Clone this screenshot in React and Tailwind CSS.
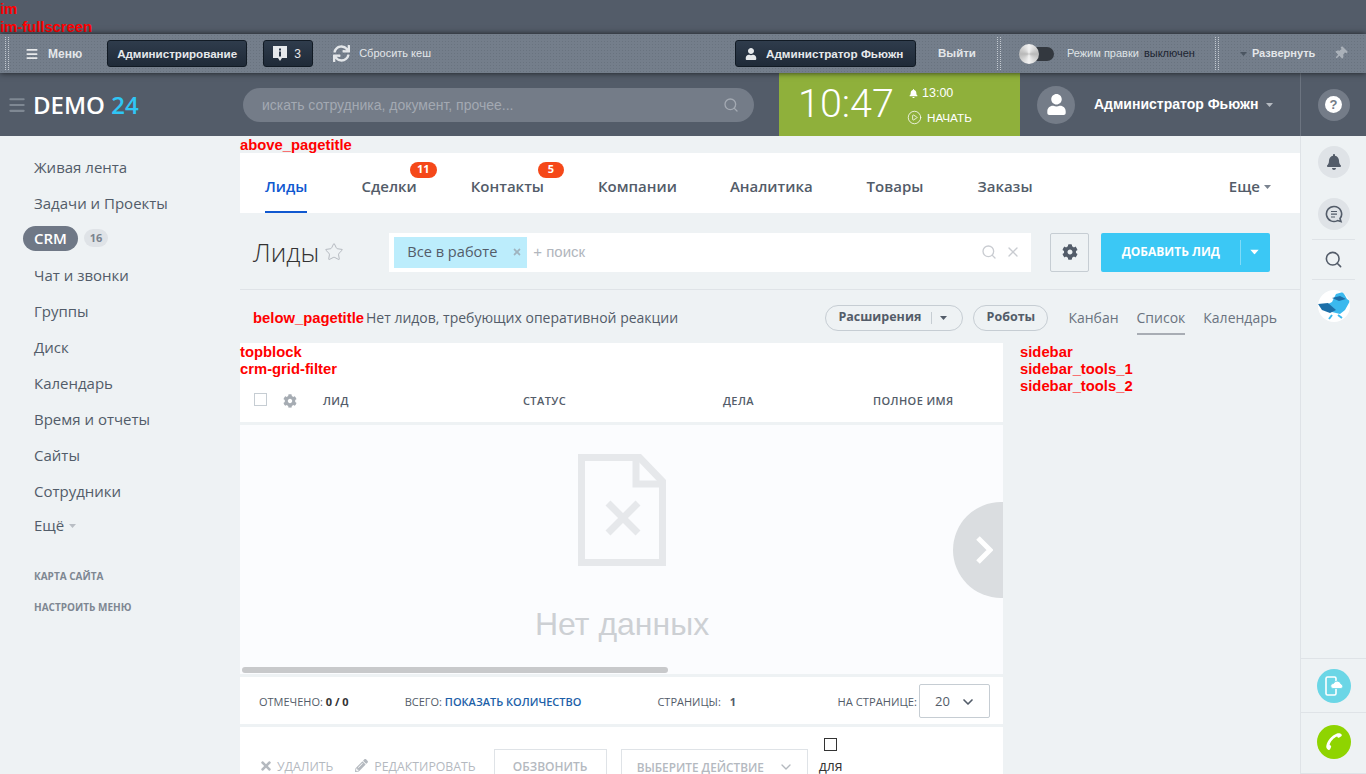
import React from 'react';
import { Menu, Search, X, ChevronDown, Star, CirclePlay } from 'lucide-react';
import { FaCog, FaUser, FaBell, FaThumbtack, FaPencilAlt, FaTimes, FaSync } from 'react-icons/fa';

const OPEN = "font-['Open_Sans',sans-serif]";
const ARIAL = "font-['Liberation_Sans',sans-serif]";

const Caret = ({ className }) => (
    <svg width="7" height="4" viewBox="0 0 7 4" className={className}>
        <path d="M0 0h7L3.5 4z" fill="currentColor" />
    </svg>
);

const Dots = () => (
    <div className="h-[33px] w-[4px] border-x border-dotted border-[#c3c9d0]" />
);

const Label = ({ children, className = '' }) => (
    <div className={`${ARIAL} pt-[1px] text-[14.8px] leading-[16px] font-bold text-[#ff0000] ${className}`}>{children}</div>
);

const DarkBtn = ({ children, className = '' }) => (
    <div className={`h-[27px] flex items-center rounded-[3px] border border-[#111a24] bg-gradient-to-b from-[#2f3c4c] to-[#1f2a38] text-[#e6e9ec] ${className}`}>
        {children}
    </div>
);

const TopPanel = () => (
    <div className={`${ARIAL} relative z-10 h-[39px] flex items-center bg-[#747e8b] bg-[radial-gradient(#69737f_1px,transparent_1px)] bg-[length:3px_3px] shadow-[0_0_6px_rgba(0,0,0,0.7)] text-[12px] font-bold`}>
        <div className="ml-[5px]"><Dots /></div>
        <Menu size={14} strokeWidth={3} className="ml-[16px] text-[#e8eaec]" />
        <span className="ml-[9px] text-[#e3e6e9]">Меню</span>
        <DarkBtn className="ml-[25px] w-[140px] justify-center text-[11.6px]">Администрирование</DarkBtn>
        <DarkBtn className="ml-[16px] w-[50px]">
            <svg width="14" height="16" viewBox="0 0 14 16" className="ml-[9px]">
                <path d="M0 0h14v12H9l-2 3-2-3H0z" fill="#e6e9ec" />
                <path d="M6 2.5h2v2H6zM6 5.5h2v5H6z" fill="#2a3646" />
            </svg>
            <span className="ml-[7px] font-normal">3</span>
        </DarkBtn>
        <FaSync size={17} className="ml-[20px] text-[#e3e6e9]" />
        <span className="ml-[9px] text-[11px] font-normal text-[#e3e6e9]">Сбросить кеш</span>
        <DarkBtn className="ml-[304px] w-[181px] text-[11.7px]">
            <FaUser size={12} className="ml-[9px]" />
            <span className="ml-[9px]">Администратор Фьюжн</span>
        </DarkBtn>
        <span className="ml-[22px] text-[11.5px] text-[#e3e6e9]">Выйти</span>
        <div className="ml-[21px]"><Dots /></div>
        <div className="relative ml-[19px] h-[14px] w-[34px] rounded-full bg-[#33383f]">
            <div className="absolute -left-[1px] -top-[3px] h-[20px] w-[20px] rounded-full bg-[conic-gradient(#f4f4f4,#b8b8b8,#f4f4f4,#b8b8b8,#f4f4f4)]" />
        </div>
        <span className="ml-[13px] text-[11px] font-normal text-[#dfe3e6]">Режим правки</span>
        <span className="ml-[5px] text-[11px] font-normal text-[#1c2430]">выключен</span>
        <div className="ml-[20px]"><Dots /></div>
        <Caret className="ml-[21px] text-[#4b5561]" />
        <span className="ml-[5px] text-[11px] text-[#e3e6e9]">Развернуть</span>
        <FaThumbtack size={13} className="ml-[19px] rotate-45 text-[#aab1b9]" />
    </div>
);

const Header = () => (
    <div className="h-[63px] flex bg-[#535c69]">
        <div className="w-[243px] flex items-center">
            <Menu size={20} strokeWidth={2.5} className="ml-[7px] text-[#7f8893]" />
            <span className={`${OPEN} ml-[6px] text-[24px] leading-none font-semibold text-white`}>DEMO <span className="text-[#2fc6f6]">24</span></span>
        </div>
        <div className={`${ARIAL} mt-[15px] h-[34px] w-[511px] flex items-center justify-between rounded-full bg-[#747c88] px-[15px] text-[14px] text-[#a3a9b2]`}>
            <span className="ml-[4px]">искать сотрудника, документ, прочее...</span>
            <Search size={16} className="text-[#a3a9b2]" />
        </div>
        <div className="ml-[25px] w-[241px] flex bg-[#8fb03b] text-white">
            <span className="ml-[19px] mt-[8px] w-[95px] font-['Roboto',sans-serif] text-[39.5px] leading-[46px] font-light">10:47</span>
            <div className={`${ARIAL} ml-[14px] mt-[11px] flex flex-col text-[12px]`}>
                <span className="ml-[2px] flex items-center gap-[4px] text-[12.5px]"><FaBell size={9} />13:00</span>
                <span className="mt-[6px] flex items-center gap-[5px] text-[11.7px]"><CirclePlay size={15} strokeWidth={1.25} />НАЧАТЬ</span>
            </div>
        </div>
        <div className="w-[280px] flex items-center">
            <div className="ml-[17px] h-[38px] w-[38px] flex items-center justify-center rounded-full bg-[#747c88]">
                <FaUser size={21} className="text-white" />
            </div>
            <span className={`${ARIAL} ml-[19px] text-[14px] font-bold text-white`}>Администратор Фьюжн</span>
            <Caret className="ml-[8px] text-[#b5bac1]" />
        </div>
        <div className="w-[66px] flex items-center justify-center border-l border-[#6c7480]">
            <div className="h-[32px] w-[32px] flex items-center justify-center rounded-full bg-[#747c88]">
                <span className={`${ARIAL} h-[17px] w-[17px] flex items-center justify-center rounded-full bg-white text-[13px] font-bold text-[#747c88]`}>?</span>
            </div>
        </div>
    </div>
);

const LeftMenu = () => {
    const top = ['Живая лента', 'Задачи и Проекты'];
    const rest = ['Чат и звонки', 'Группы', 'Диск', 'Календарь', 'Время и отчеты', 'Сайты', 'Сотрудники'];
    const item = 'h-[36px] flex items-center pl-[34px]';
    return (
        <div className={`${OPEN} w-[240px] shrink-0 pt-[13px] text-[15px] text-[#525c69]`}>
            {top.map((t) => <div key={t} className={item}>{t}</div>)}
            <div className="h-[36px] flex items-center pb-[2px] pl-[23px]">
                <span className="h-[25px] w-[55px] flex items-center justify-center rounded-full bg-[#6f7886] font-semibold text-white">CRM</span>
                <span className="ml-[6px] h-[18px] w-[24px] flex items-center justify-center rounded-full bg-[#dfe3e7] text-[11px] font-bold text-[#7a838f]">16</span>
            </div>
            {rest.map((t) => <div key={t} className={item}>{t}</div>)}
            <div className="mt-[-2px] h-[36px] flex items-center pl-[34px]">
                Ещё <Caret className="ml-[5px] mt-[2px] text-[#b9bec4]" />
            </div>
            <div className="mt-[26px] pl-[34px] text-[10px] leading-[14px] font-bold text-[#7e8792]">КАРТА САЙТА</div>
            <div className="mt-[17px] pl-[34px] text-[10px] leading-[14px] font-bold text-[#7e8792]">НАСТРОИТЬ МЕНЮ</div>
        </div>
    );
};

const Badge = ({ children, className = '' }) => (
    <span className={`absolute -top-[25px] h-[16px] flex items-center justify-center rounded-full bg-[#f54819] text-[11px] font-bold text-white ${className}`}>{children}</span>
);

const Tabs = () => (
    <div className={`${OPEN} h-[60px] flex bg-white text-[15px] font-semibold text-[#535c69]`}>
        <div className="relative ml-[25px] h-full flex items-center pt-[7px] text-[#1058d0]">
            Лиды
            <div className="absolute bottom-0 left-0 right-0 h-[2px] bg-[#1058d0]" />
        </div>
        <div className="relative ml-[54px] h-full flex items-center pt-[7px]">
            Сделки<span className="relative"><Badge className="-left-[7px] w-[27px]">11</Badge></span>
        </div>
        <div className="relative ml-[54px] h-full flex items-center pt-[7px]">
            Контакты<span className="relative"><Badge className="-left-[6px] w-[26px]">5</Badge></span>
        </div>
        <div className="ml-[54px] h-full flex items-center pt-[7px]">Компании</div>
        <div className="ml-[53px] h-full flex items-center pt-[7px]">Аналитика</div>
        <div className="ml-[54px] h-full flex items-center pt-[7px]">Товары</div>
        <div className="ml-[54px] h-full flex items-center pt-[7px]">Заказы</div>
        <div className="ml-auto mr-[29px] h-full flex items-center pt-[7px]">Еще<Caret className="ml-[4px] text-[#7a838f]" /></div>
    </div>
);

const TitleRow = () => (
    <div className={`${OPEN} h-[77px] flex items-center border-b border-[#dfe3e7] pt-[2px]`}>
        <span className="ml-[13px] text-[26px] font-light text-[#333]">Лиды</span>
        <Star size={20} strokeWidth={1} className="ml-[5px] text-[#a9afb6]" />
        <div className="ml-[45px] h-[39px] w-[642px] flex items-center bg-white pl-[5px] pr-[10px]">
            <div className="h-[31px] w-[133px] flex items-center bg-[#bcedfc] pl-[13px] text-[14.6px] text-[#535c69]">
                Все в работе
                <FaTimes size={10} className="ml-[15px] text-[#a0b4bf]" />
            </div>
            <span className={`${ARIAL} ml-[6px] text-[15px] text-[#b1b6bd]`}>+ поиск</span>
            <Search size={16} className="ml-auto text-[#c9ccd1]" />
            <X size={16} className="ml-[8px] text-[#c9ccd1]" />
        </div>
        <div className="ml-[19px] h-[39px] w-[39px] flex items-center justify-center rounded-[2px] border border-[#c6cdd3]">
            <FaCog size={16} className="text-[#535c69]" />
        </div>
        <div className="ml-[12px] h-[39px] w-[169px] flex items-center rounded-[2px] bg-[#3bc8f5] text-[12px] font-bold text-white">
            <span className="w-[139px] text-center">ДОБАВИТЬ ЛИД</span>
            <div className="h-[25px] w-px bg-[#7fdbf8]" />
            <Caret className="ml-[10px] scale-125 text-white" />
        </div>
    </div>
);

const SubRow = () => (
    <div className={`${OPEN} h-[53px] flex items-center pt-[2px] text-[14px] text-[#6a737f]`}>
        <Label className="ml-[13px]">below_pagetitle</Label>
        <span className="ml-[2px] text-[#535c69]">Нет лидов, требующих оперативной реакции</span>
        <div className="ml-auto h-[26px] w-[138px] flex items-center rounded-full border border-[#c6cdd3] pl-[12px] text-[12.5px] font-bold text-[#535c69]">
            Расширения
            <div className="ml-[10px] h-[12px] w-px bg-[#c6cdd3]" />
            <Caret className="ml-[8px] text-[#535c69]" />
        </div>
        <div className="ml-[10px] h-[26px] w-[75px] flex items-center justify-center rounded-full border border-[#c6cdd3] text-[12.5px] font-bold text-[#535c69]">Роботы</div>
        <span className="ml-[20px]">Канбан</span>
        <span className="relative ml-[18px]">
            Список
            <span className="absolute -bottom-[7px] left-0 right-0 h-[2px] bg-[#a8adb4]" />
        </span>
        <span className="ml-[18px] mr-[23px]">Календарь</span>
    </div>
);

const EmptyDoc = () => (
    <svg width="88" height="112" viewBox="0 0 88 112">
        <path d="M3.5 3.5h58l23 24v81h-81z" fill="none" stroke="#e6e8eb" strokeWidth="7" />
        <path d="M58 3v27h27" fill="none" stroke="#e6e8eb" strokeWidth="7" />
        <path d="M30 49l30 30M60 49L30 79" fill="none" stroke="#e6e8eb" strokeWidth="7" />
    </svg>
);

const Grid = () => (
    <div className={`${OPEN} w-[763px] shrink-0`}>
        <div className="bg-white">
            <Label>topblock</Label>
            <Label>crm-grid-filter</Label>
            <div className="mt-[4px] h-[41px] flex items-center text-[11px] font-semibold tracking-[0.4px] text-[#535c69]">
                <div className="mb-[5px] ml-[14px] h-[13px] w-[13px] border border-[#c6cdd3]" />
                <FaCog size={14} className="mb-[2px] ml-[16px] text-[#a6acb3]" />
                <span className="ml-[26px] w-[200px]">ЛИД</span>
                <span className="w-[200px]">СТАТУС</span>
                <span className="w-[150px]">ДЕЛА</span>
                <span>ПОЛНОЕ ИМЯ</span>
            </div>
        </div>
        <div className="relative h-[252px] overflow-hidden border-t-[3px] border-[#eef2f4] bg-[#fbfcfe]">
            <div className="ml-[338px] mt-[29px] w-[96px]"><EmptyDoc /></div>
            <div className={`${ARIAL} mt-[40px] ml-[295px] text-[32px] leading-[37px] text-[#cdd0d4]`}>Нет данных</div>
            <div className="absolute right-0 top-[77px] h-[96px] w-[50px] flex items-center rounded-l-full bg-[#dadde0]">
                <svg width="18" height="30" viewBox="0 0 18 30" className="ml-[22px]">
                    <path d="M3 3l12 12L3 27" fill="none" stroke="white" strokeWidth="5" />
                </svg>
            </div>
            <div className="absolute bottom-[1px] left-[2px] h-[6px] w-[426px] rounded-full bg-[#c8c9cb]" />
        </div>
        <div className="mt-[3px] h-[47px] flex items-center bg-white text-[11px] text-[#535c69]">
            <span className="ml-[19px] mt-[3px]">ОТМЕЧЕНО: <b className="text-[#333]">0 / 0</b></span>
            <span className="ml-[56px] mt-[3px]">ВСЕГО: <span className="font-semibold text-[#1d5fa8]">ПОКАЗАТЬ КОЛИЧЕСТВО</span></span>
            <span className="ml-[76px] mt-[3px]">СТРАНИЦЫ: <b className="ml-[6px]">1</b></span>
            <span className="ml-auto mt-[3px] text-[11.2px]">НА СТРАНИЦЕ:</span>
            <div className="ml-[2px] mr-[13px] h-[34px] w-[71px] flex items-center justify-between rounded-[2px] border border-[#c6cdd3] px-[15px] pt-[2px] text-[13px]">
                20<ChevronDown size={16} strokeWidth={2.5} className="-mr-[2px]" />
            </div>
        </div>
        <div className="mt-[3px] h-[47px] flex items-start bg-white text-[12.3px] leading-[14px] text-[#b4b9bf]">
            <FaTimes size={14} className="ml-[19px] mt-[32px]" />
            <span className="ml-[4px] mt-[33px]">УДАЛИТЬ</span>
            <FaPencilAlt size={13} className="ml-[22px] mt-[32px]" />
            <span className="ml-[6px] mt-[33px]">РЕДАКТИРОВАТЬ</span>
            <div className="ml-[18px] mt-[22px] h-[40px] w-[113px] flex items-start justify-center border border-[#dfe3e7] pt-[10px] text-[12px] font-semibold">ОБЗВОНИТЬ</div>
            <div className="ml-[14px] mt-[22px] h-[40px] w-[187px] flex items-start border border-[#dfe3e7] pl-[15px] pt-[10px] text-[11.8px] font-semibold">
                ВЫБЕРИТЕ ДЕЙСТВИЕ<ChevronDown size={16} className="ml-[14px] -mt-[1px]" />
            </div>
            <div className="ml-[11px] flex flex-col items-center text-[14px] leading-[16px] text-[#333]">
                <div className="mt-[11px] h-[13px] w-[13px] border border-[#333]" />
                <span className="mt-[7px]">для</span>
            </div>
        </div>
    </div>
);

const RoundIcon = ({ children, className = 'h-[32px] w-[32px] bg-[#dfe3e7]' }) => (
    <div className={`flex items-center justify-center rounded-full ${className}`}>{children}</div>
);

const RightBar = () => (
    <div className="w-[66px] shrink-0 flex flex-col items-center border-l border-[#dfe3e7]">
        <div className="mt-[10px]">
            <RoundIcon><FaBell size={16} className="text-[#535c69]" /></RoundIcon>
        </div>
        <div className="mt-[20px]">
            <RoundIcon>
                <svg width="18" height="18" viewBox="0 0 18 18" fill="none" stroke="#535c69" strokeWidth="1.6">
                    <path d="M9 1.5a7.5 7.5 0 1 0 3.5 14.1l3.5 1-1-3A7.5 7.5 0 0 0 9 1.5z" />
                    <path d="M6 6.5h6M6 9.2h6M6 12h4" strokeWidth="1.2" />
                </svg>
            </RoundIcon>
        </div>
        <div className="mt-[9px] h-[41px] w-[43px] flex items-center justify-center border-y border-[#dfe3e7]">
            <Search size={19} strokeWidth={2} className="text-[#535c69]" />
        </div>
        <div className="mt-[10px]">
            <RoundIcon className="h-[32px] w-[32px] overflow-hidden bg-white">
                <svg width="32" height="32" viewBox="0 0 32 32">
                    <path d="M8 15l6-3 4-8 7-2 4 7 3 2-5 9-5 4-8-2z" fill="#3bb9ee" />
                    <path d="M0 14l10-1 8 7-6 3-8-3z" fill="#1d6fa8" />
                    <path d="M14 8l8-2 6 3-7 2z" fill="#1d6fa8" />
                    <path d="M14 25l-3 4M20 25l4 3" stroke="#3bb9ee" strokeWidth="2" />
                </svg>
            </RoundIcon>
        </div>
        <div className="mt-auto w-full h-[54px] flex items-center justify-center border-t border-[#dfe3e7]">
            <RoundIcon className="h-[34px] w-[34px] bg-[#6bd6e6]">
                <svg width="22" height="20" viewBox="0 0 22 20" fill="none">
                    <rect x="3" y="1" width="10" height="18" rx="1.5" stroke="white" strokeWidth="1.6" />
                    <path d="M10 12.5a2.5 2.5 0 0 1 .5-5 4 4 0 0 1 7.5.5 2.3 2.3 0 0 1 0 4.5z" fill="white" stroke="#6bd6e6" strokeWidth="0.8" />
                </svg>
            </RoundIcon>
        </div>
        <div className="w-full h-[62px] flex items-start justify-center border-y border-[#dfe3e7] pt-[12px]">
            <RoundIcon className="h-[34px] w-[34px] bg-[#8fd400]">
                <svg width="20" height="20" viewBox="0 0 20 20" fill="white">
                    <path d="M13 1.5c1.5-.7 3.600-.4 4.600 1 .4.600.2 1.300-.3 1.700l-2 1.400c-.5.300-1.100.2-1.500-.2l-.7-.8C9.500 6 6.500 9.500 5.600 13l1 .5c.5.300.7.900.5 1.400l-1 2.300c-.3.600-1 .9-1.600.7C2.900 17.300 2 15.600 2.300 14 3.300 8.500 7.500 3.500 13 1.500z" />
                </svg>
            </RoundIcon>
        </div>
    </div>
);

export default function App() {
    return (
        <div className="h-[774px] w-[1366px] overflow-hidden flex flex-col bg-[#eef2f4]">
            <div className="h-[34px] shrink-0 bg-[#535c69]">
                <Label>im</Label>
                <Label className="mt-[1px]">im-fullscreen</Label>
            </div>
            <TopPanel />
            <Header />
            <div className="flex-1 min-h-0 flex">
                <LeftMenu />
                <div className="w-[1060px] shrink-0">
                    <Label>above_pagetitle</Label>
                    <Tabs />
                    <TitleRow />
                    <SubRow />
                    <div className="flex">
                        <Grid />
                        <div className="ml-[17px]">
                            <Label>sidebar</Label>
                            <Label>sidebar_tools_1</Label>
                            <Label>sidebar_tools_2</Label>
                        </div>
                    </div>
                </div>
                <RightBar />
            </div>
        </div>
    );
}
